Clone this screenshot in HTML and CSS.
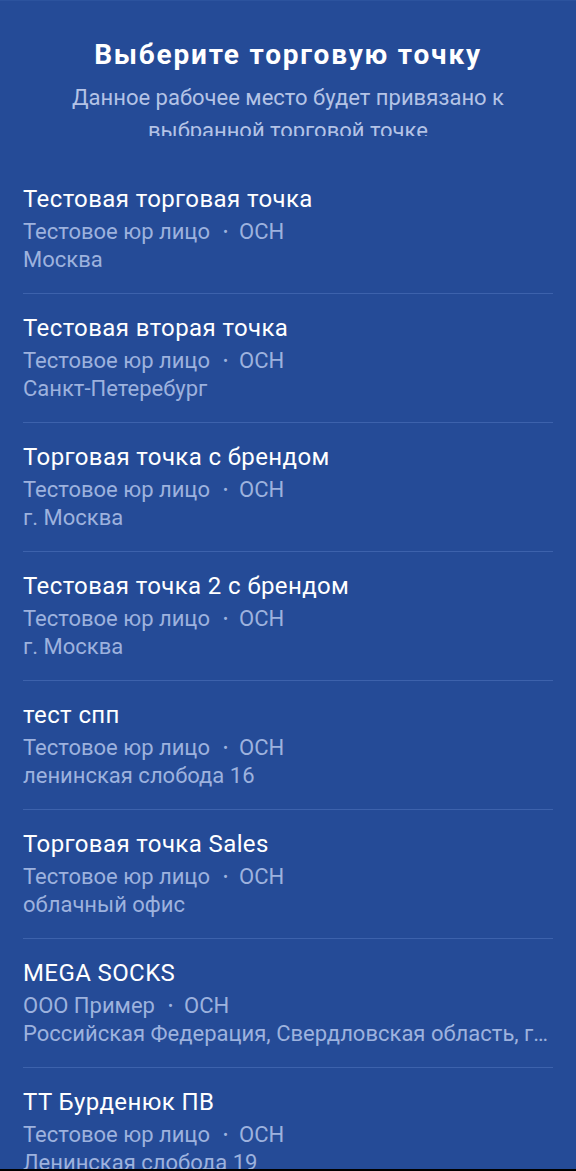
FILE: index.html
```html
<html>
	<head>
		<title>Выберите торговую точку</title>
		<link rel="stylesheet" href="styles.css">
	</head>
	<body>
		<div class="screen">
			<div class="header">
				<h1>Выберите торговую точку</h1>
				<div class="subtitle">Данное рабочее место будет привязано к выбранной торговой точке</div>
			</div>
			<div class="list">
				<div class="item">
					<div class="name">Тестовая торговая точка</div>
					<div class="meta">Тестовое юр лицо<span class="dot">•</span>ОСН</div>
					<div class="meta">Москва</div>
				</div>
				<div class="item">
					<div class="name">Тестовая вторая точка</div>
					<div class="meta">Тестовое юр лицо<span class="dot">•</span>ОСН</div>
					<div class="meta">Санкт-Петеребург</div>
				</div>
				<div class="item">
					<div class="name">Торговая точка с брендом</div>
					<div class="meta">Тестовое юр лицо<span class="dot">•</span>ОСН</div>
					<div class="meta">г. Москва</div>
				</div>
				<div class="item">
					<div class="name">Тестовая точка 2 с брендом</div>
					<div class="meta">Тестовое юр лицо<span class="dot">•</span>ОСН</div>
					<div class="meta">г. Москва</div>
				</div>
				<div class="item">
					<div class="name">тест спп</div>
					<div class="meta">Тестовое юр лицо<span class="dot">•</span>ОСН</div>
					<div class="meta">ленинская слобода 16</div>
				</div>
				<div class="item">
					<div class="name">Торговая точка Sales</div>
					<div class="meta">Тестовое юр лицо<span class="dot">•</span>ОСН</div>
					<div class="meta">облачный офис</div>
				</div>
				<div class="item">
					<div class="name">MEGA SOCKS</div>
					<div class="meta">ООО Пример<span class="dot">•</span>ОСН</div>
					<div class="meta">Российская Федерация, Свердловская область, г. Екатеринбург, ул. Ленина 1</div>
				</div>
				<div class="item">
					<div class="name">ТТ Бурденюк ПВ</div>
					<div class="meta">Тестовое юр лицо<span class="dot">•</span>ОСН</div>
					<div class="meta">Ленинская слобода 19</div>
				</div>
			</div>
		</div>
	</body>
</html>
```

FILE: styles.css
```css
html, body
{
	margin: 0;
	background: #000000;
}

.screen
{
	height: 1169px;
	overflow: hidden;
	background: #254b97;
	border-top: 1px solid #2c539e;
	box-sizing: border-box;
	font-family: Roboto, "Noto Sans", sans-serif;
	color: #ffffff;
}

.header
{
	padding: 36px 30px 0;
	text-align: center;
}

h1
{
	margin: 0;
	font-size: 28px;
	font-weight: 700;
	letter-spacing: 1.8px;
	line-height: 36px;
}

.subtitle
{
	height: 55px;
	margin: 8px auto 0;
	max-width: 460px;
	overflow: hidden;
	font-size: 22px;
	line-height: 33px;
	color: #b4c3e6;
}

.list
{
	padding: 0 23px;
	margin-top: 29px;
}

.item
{
	padding: 18px 0 19px;
	border-bottom: 1px solid #3d62ac;
}

.name
{
	margin-bottom: 2px;
	font-size: 24px;
	letter-spacing: 0.4px;
	line-height: 33px;
}

.meta
{
	font-size: 22px;
	line-height: 28px;
	color: #9db2de;
	white-space: nowrap;
	overflow: hidden;
	text-overflow: ellipsis;
}

.dot
{
	margin: 0 11px 0 13px;
	font-size: 15px;
	vertical-align: 2px;
}
```
